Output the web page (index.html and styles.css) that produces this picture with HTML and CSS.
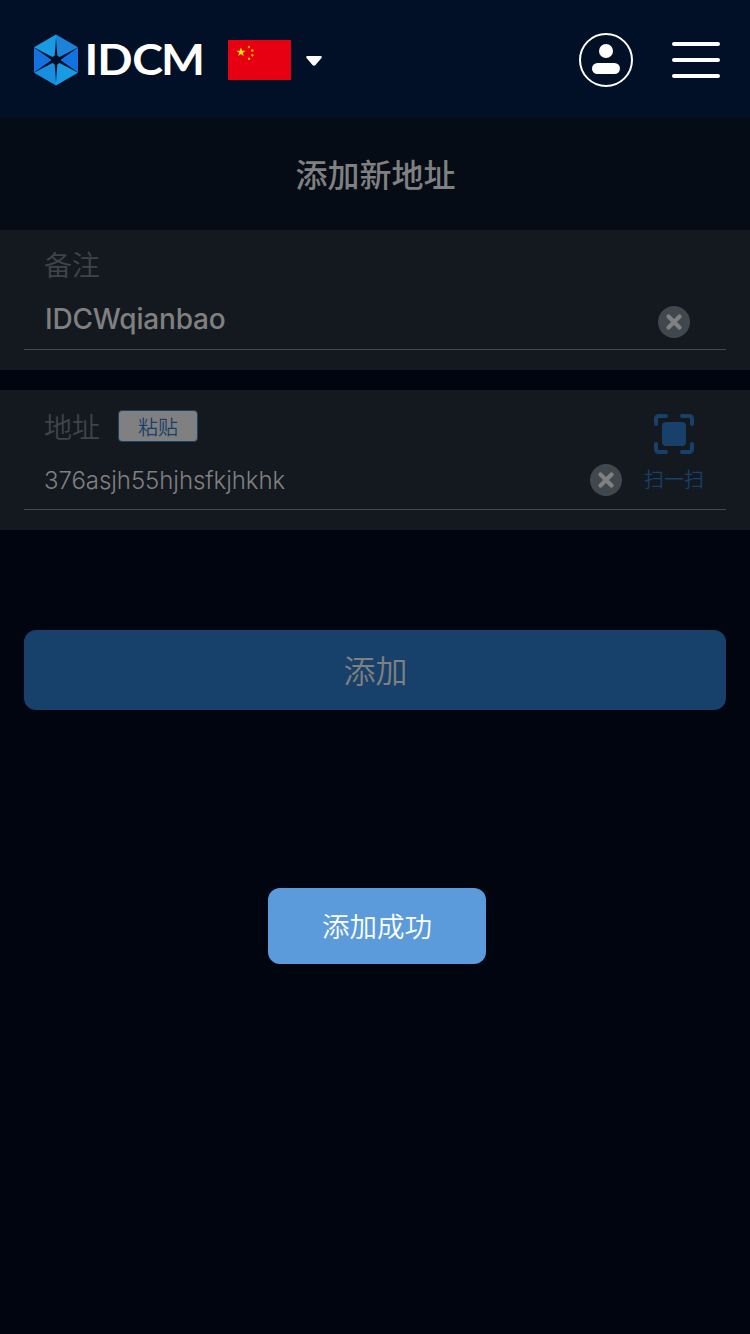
FILE: index.html
```html
<!DOCTYPE html>
<html lang="zh-CN">
<head>
<meta charset="utf-8">
<title>添加新地址</title>
<link rel="stylesheet" href="styles.css">
</head>
<body>
<header class="topbar">
  <svg class="logo" width="176" height="54" viewBox="0 0 176 54">
    <path fill="#189be2" d="M24 1.500V27L2 14.200ZM24 52.500V27L46 39.800Z"/>
    <path fill="#1b84d9" d="M24 1.500V27L46 14.200Z"/>
    <path fill="#168fdf" d="M24 52.500V27L2 39.800Z"/>
    <path fill="#1272df" d="M2 14.200L24 27L2 39.800ZM46 14.200L24 27L46 39.800Z"/>
    <path fill="#010f26" d="M24 5l1.300 17.500 2.200 1.500L46 14.500 29 26.500v1L46 39.500 27.500 30l-2.200 1.500L24 49l-1.300-17.500-2.200-1.500L2 39.500 19 27.500v-1L2 14.500 20.500 24l2.200-1.500Z"/>
    <text class="logo-text" transform="scale(1.120 1)" x="46.800 58.300 89.500 115.200" y="42">IDCM</text>
  </svg>
  <svg class="flag" width="63" height="40" viewBox="0 0 63 40">
    <rect width="63" height="40" fill="#e60012"/>
    <path fill="#fff100" d="M13 7.500l1.100 3.200h3.400l-2.700 2 1 3.300-2.800-2-2.800 2 1-3.300-2.700-2h3.400Z"/>
    <g fill="#f8b500"><circle cx="21" cy="7" r="1.200"/><circle cx="24.300" cy="10.500" r="1.200"/><circle cx="24.300" cy="15.200" r="1.200"/><circle cx="21" cy="18.700" r="1.200"/></g>
  </svg>
  <svg class="caret" width="18" height="12" viewBox="0 0 18 12"><path fill="#fff" d="M2 1h14q1.500.5.500 2l-6 7q-1.500 1.500-3 0l-6-7Q.5 1.500 2 1Z"/></svg>
  <svg class="user" width="54" height="54" viewBox="0 0 54 54">
    <circle cx="27" cy="27" r="26" fill="none" stroke="#fff" stroke-width="2"/>
    <circle cx="27" cy="18" r="7" fill="#fff"/><rect x="13" y="30" width="28" height="11" rx="5.500" fill="#fff"/>
  </svg>
  <div class="menu"><i></i><i></i><i></i></div>
</header>
<h1 class="title">添加新地址</h1>
<main>
  <section class="field">
    <div class="line">
      <div class="info">
        <div class="label label-name">备注</div>
        <div class="value name">IDCWqianbao</div>
      </div>
      <svg class="clear clear-name" width="32" height="32" viewBox="0 0 32 32"><circle cx="16" cy="16" r="16" fill="#40484e"/><path d="M10.500 10.500l11 11m0-11l-11 11" stroke="#808080" stroke-width="4.200" stroke-linecap="round"/></svg>
    </div>
  </section>
  <section class="field">
    <div class="line">
      <div class="info">
        <div class="label label-address">地址<span class="paste">粘贴</span></div>
        <div class="value address">376asjh55hjhsfkjhkhk</div>
      </div>
      <svg class="clear clear-address" width="32" height="32" viewBox="0 0 32 32"><circle cx="16" cy="16" r="16" fill="#40484e"/><path d="M10.500 10.500l11 11m0-11l-11 11" stroke="#808080" stroke-width="4.200" stroke-linecap="round"/></svg>
      <div class="scan">
        <svg width="40" height="40" viewBox="0 0 40 40"><path d="M2 10V5q0-3 3-3h7M28 2h7q3 0 3 3v5M38 30v5q0 3-3 3h-7M12 38H5q-3 0-3-3v-5" fill="none" stroke="#17406a" stroke-width="4" stroke-linecap="round"/><rect x="8" y="8" width="24" height="24" rx="4" fill="#17406a"/></svg>
        <span>扫一扫</span>
      </div>
    </div>
  </section>
  <button class="submit">添加</button>
  <div class="toast">添加成功</div>
</main>
</body>
</html>
```
FILE: styles.css
```css
* { box-sizing: border-box; }
body {
  margin: 0;
  height: 1334px;
  overflow: hidden;
  background: #00050f;
  color: #808080;
  font-family: Inter, "Noto Sans CJK SC", sans-serif;
}
svg { display: block; flex: none; }
.topbar {
  display: flex;
  align-items: center;
  height: 118px;
  padding: 2px 30px 0 32px;
  background: #011026;
}
.logo { overflow: visible; }
.logo-text { font: 700 41.500px Lato, sans-serif; fill: #fff; }
.flag { margin-left: 20px; }
.caret { margin-left: 14px; margin-top: 2px; }
.user { margin-left: auto; }
.menu { display: grid; gap: 12px; width: 48px; margin-left: 39px; }
.menu i { height: 4px; border-radius: 2px; background: #fff; }
.title {
  height: 112px;
  margin: 0;
  padding-left: 1px;
  background: #060c16;
  font-size: 32px;
  font-weight: 500;
  line-height: 115px;
  text-align: center;
}
.field {
  height: 140px;
  margin-bottom: 20px;
  padding: 0 24px;
  background: #14191f;
}
.line {
  display: flex;
  height: 120px;
  padding-left: 20px;
  border-bottom: 1px solid #44494e;
}
.info { flex: 1; }
.label {
  display: flex;
  align-items: center;
  height: 70px;
  color: #3d444c;
  font-size: 28px;
  font-weight: 350;
}
.label-name { height: 68px; }
.label-address { height: 71px; }
.paste {
  width: 80px;
  height: 32px;
  margin-left: 18px;
  border: 1px solid #17406a;
  border-radius: 4px;
  background: #808080;
  color: #17406a;
  font-size: 20px;
  font-weight: 350;
  line-height: 34px;
  text-align: center;
}
.value { line-height: 40px; }
.name { margin-top: 1px; padding-left: 1px; font-size: 28px; font-weight: 450; letter-spacing: -0.180px; }
.address { font-size: 24px; font-weight: 350; letter-spacing: -0.060px; }
.clear-name { margin: 76px 36px 0 0; }
.clear-address { margin: 74px 22px 0 0; }
.scan {
  display: flex;
  flex-direction: column;
  align-items: center;
  width: 60px;
  margin: 24px 22px 0 0;
  color: #17406a;
  font-size: 20px;
  font-weight: 350;
  line-height: 30px;
}
.scan span { margin-top: 11px; white-space: nowrap; }
.submit {
  display: block;
  width: 702px;
  height: 80px;
  margin: 100px auto 0;
  padding: 0 0 2px 1px;
  border: 0;
  border-radius: 12px;
  background: #17406a;
  color: #808080;
  font: 350 32px/78px "Noto Sans CJK SC", sans-serif;
}
.toast {
  width: 218px;
  height: 76px;
  margin: 178px 0 0 268px;
  border-radius: 12px;
  background: #5b9bdb;
  color: #fff;
  font-size: 27.500px;
  font-weight: 350;
  line-height: 78px;
  text-align: center;
}
```
